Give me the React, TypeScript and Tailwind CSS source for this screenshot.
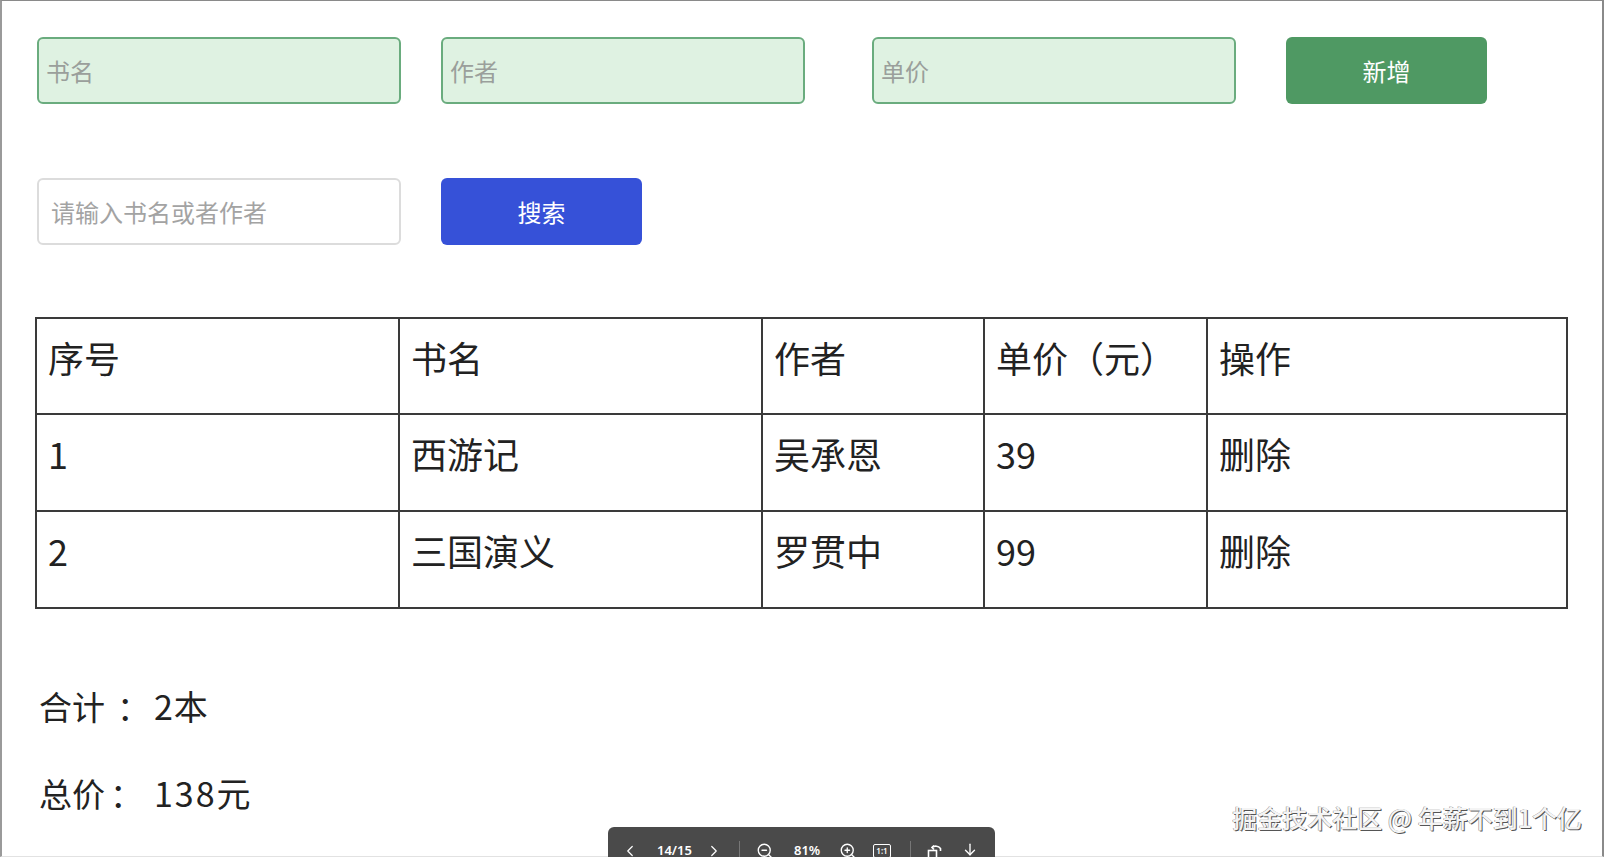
import React from "react";
import { ChevronLeft, ChevronRight, ZoomIn, ZoomOut, ArrowDownToLine } from "lucide-react";

const rows = [
  { id: 1, name: "西游记", author: "吴承恩", price: 39 },
  { id: 2, name: "三国演义", author: "罗贯中", price: 99 },
];

export default function App() {
  const cell = "border-2 border-[#3a3a3a] align-top px-[11px] pt-[13px] text-left font-normal";
  return (
    <div className="w-[1604px] h-[857px] bg-white overflow-hidden font-['Noto_Sans_CJK_SC','Noto_Sans',sans-serif]">
      <div className="relative w-[1604px] h-[857px] border-t border-t-[#8a8a8a] border-l-2 border-l-[#9a9a9a] border-r-2 border-r-[#8a8a8a] border-b border-b-[#e2e2e2] box-border pl-[35px] pt-[36px] text-[#222]">
        {/* row 1 */}
        <div className="flex items-center h-[67px]">
          <input
            placeholder="书名"
            className="w-[364px] h-[67px] rounded-md border-2 border-[#6aac7e] bg-[#dff2e2] px-[7px] text-[24px] outline-none placeholder:text-[#9a9f9b]"
          />
          <input
            placeholder="作者"
            className="ml-[40px] w-[364px] h-[67px] rounded-md border-2 border-[#6aac7e] bg-[#dff2e2] px-[7px] text-[24px] outline-none placeholder:text-[#9a9f9b]"
          />
          <input
            placeholder="单价"
            className="ml-[67px] w-[364px] h-[67px] rounded-md border-2 border-[#6aac7e] bg-[#dff2e2] px-[7px] text-[24px] outline-none placeholder:text-[#9a9f9b]"
          />
          <button className="ml-[50px] w-[201px] h-[67px] rounded-md bg-[#4f9963] text-white text-[24px]">
            新增
          </button>
        </div>
        {/* row 2 */}
        <div className="flex items-center h-[67px] mt-[74px]">
          <input
            placeholder="请输入书名或者作者"
            className="w-[364px] h-[67px] rounded-md border-2 border-[#dcdcdc] bg-white px-[12px] text-[24px] outline-none placeholder:text-[#a3a3a3]"
          />
          <button className="ml-[40px] w-[201px] h-[67px] rounded-md bg-[#3651d8] text-white text-[24px]">
            搜索
          </button>
        </div>
        {/* table */}
        <table className="mt-[72px] ml-[-2px] w-[1531px] table-fixed border-collapse border-2 border-[#3a3a3a] text-[36px] leading-[1.4]">
          <colgroup>
            <col className="w-[363px]" />
            <col className="w-[363px]" />
            <col className="w-[222px]" />
            <col className="w-[223px]" />
            <col className="w-[360px]" />
          </colgroup>
          <thead>
            <tr className="h-[96px]">
              <th className={cell}>序号</th>
              <th className={cell}>书名</th>
              <th className={cell}>作者</th>
              <th className={cell}>单价（元）</th>
              <th className={cell}>操作</th>
            </tr>
          </thead>
          <tbody>
            {rows.map((r) => (
              <tr key={r.id} className="h-[97px]">
                <td className={cell}>{r.id}</td>
                <td className={cell}>{r.name}</td>
                <td className={cell}>{r.author}</td>
                <td className={cell}>{r.price}</td>
                <td className={cell}>删除</td>
              </tr>
            ))}
          </tbody>
        </table>
        {/* summary */}
        <div className="mt-[73px] text-[33px] leading-[48px] text-[#222]">
          <div className="flex pl-[2px]">
            <span className="w-[115px]">
              合计<span className="ml-[12px]">：</span>
            </span>
            <span className="text-[34px] tracking-[1px]">2本</span>
          </div>
          <div className="flex pl-[2px] mt-[39px]">
            <span className="w-[115px]">
              总价<span className="ml-[5px]">：</span>
            </span>
            <span className="text-[34px] tracking-[2px]">138元</span>
          </div>
        </div>

        {/* watermark */}
        <div className="absolute right-[20px] bottom-[21px] text-[25px] leading-[36px] font-medium text-[#f4f4f4] [text-shadow:1px_1px_0_#555,-0.5px_-0.5px_0_#888] font-['Noto_Sans_CJK_SC',sans-serif]">
          掘金技术社区 @ 年薪不到1个亿
        </div>

        {/* viewer toolbar */}
        <div className="absolute left-[606px] top-[826px] w-[387px] h-[48px] rounded-md bg-[#4a4a4a] flex items-center text-white text-[13px] font-semibold font-['Noto_Sans',sans-serif]">
          <ChevronLeft className="ml-[13px] w-[18px] h-[18px]" strokeWidth={1.6} />
          <span className="ml-[18px] w-[33px]">14/15</span>
          <ChevronRight className="ml-[15px] w-[18px] h-[18px]" strokeWidth={1.6} />
          <div className="ml-[16px] w-px h-[20px] bg-[#777]" />
          <ZoomOut className="ml-[16px] w-[18px] h-[18px]" strokeWidth={1.8} />
          <span className="ml-[20px] w-[27px]">81%</span>
          <ZoomIn className="ml-[18px] w-[18px] h-[18px]" strokeWidth={1.8} />
          <div className="ml-[16px] w-[18px] h-[14px] border border-white rounded-[2px] flex items-center justify-center text-[8px] leading-none">
            1:1
          </div>
          <div className="ml-[19px] w-px h-[20px] bg-[#777]" />
          <svg className="ml-[15px] w-[18px] h-[18px]" viewBox="0 0 18 18" fill="none" stroke="white" strokeWidth="1.6">
            <rect x="2.5" y="8.5" width="8" height="8" />
            <path d="M6 5.5 A6 6 0 0 1 14.5 6.5 L14.5 9" />
            <path d="M8 3.5 L6 5.5 L8 7.5" />
          </svg>
          <ArrowDownToLine className="ml-[17px] w-[18px] h-[18px]" strokeWidth={1.8} />
        </div>
      </div>
    </div>
  );
}
